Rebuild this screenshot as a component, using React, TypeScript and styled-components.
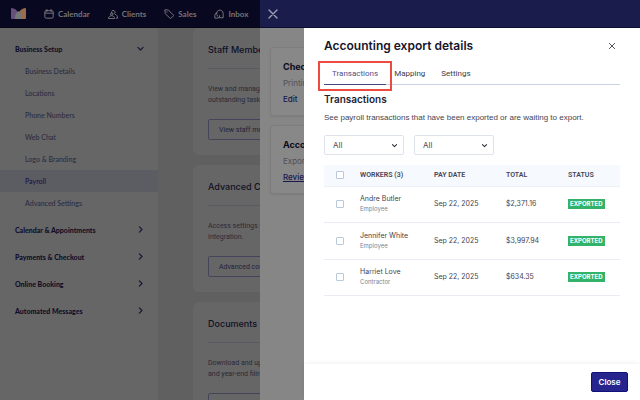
import React from "react";
import styled, { createGlobalStyle } from "styled-components";

const GlobalStyle = createGlobalStyle`
  *, *::before, *::after { box-sizing: border-box; }
  body { margin: 0; font-family: Inter, "Liberation Sans", sans-serif; background: #606060; }
  button, select, input { font-family: inherit; }
  h1, h2, h3, p { margin: 0; font-weight: inherit; }
`;

const Shell = styled.div`
  position: relative;
  height: 100vh;
  overflow: hidden;
  display: flex;
  flex-direction: column;
`;

const TopBar = styled.header`
  flex: none;
  height: 28px;
  padding: 0 11px;
  display: flex;
  align-items: center;
  background: #080820;
  border-bottom: 1px solid #050514;
`;

const Logo = styled.svg`
  width: 15px;
  height: 11px;
  margin-right: 18px;
`;

const TopNav = styled.nav`
  display: flex;
  gap: 18px;
`;

const TopLink = styled.a`
  display: flex;
  align-items: center;
  gap: 4px;
  color: #74747a;
  font: 700 8px/12px Lato, sans-serif;
  text-decoration: none;
  svg { width: 10px; height: 10px; }
`;

const Icon = styled.svg`
  flex: none;
  fill: none;
  stroke: currentColor;
  stroke-linecap: round;
  stroke-linejoin: round;
`;

const Body = styled.div`
  flex: 1;
  min-height: 0;
  display: grid;
  grid-template-columns: 158px 1fr;
`;

const Sidebar = styled.nav`
  background: #666666;
  padding-top: 7px;
  font-family: Lato, sans-serif;
`;

const GroupButton = styled.button`
  display: flex;
  align-items: center;
  justify-content: space-between;
  width: 100%;
  height: 27px;
  padding: 0 13px 0 15px;
  border: 0;
  background: none;
  color: #0e0e28;
  font-size: 7px;
  font-weight: 900;
  text-align: left;
  svg { width: 9px; height: 9px; color: #1b1b38; }
`;

const SubList = styled.ul`
  list-style: none;
  margin: -2px 0 0;
  padding: 0 0 2px;
`;

const SubLink = styled.a<{ $active?: boolean }>`
  display: block;
  height: 22px;
  padding-left: 25px;
  font-size: 7px;
  line-height: 22px;
  font-weight: 500;
  text-decoration: none;
  color: ${p => (p.$active ? "#121248" : "#2c2c42")};
  background: ${p => (p.$active ? "#5c5c63" : "transparent")};
`;

const Content = styled.main`
  min-width: 0;
  overflow: hidden;
  padding: 0 35px;
  background: #606060;
  display: flex;
  flex-direction: column;
  gap: 10px;
`;

const Card = styled.section`
  flex: none;
  height: 127px;
  padding: 0 15px;
  border-radius: 6px;
  background: #666666;
  color: #2a2a38;
`;

const CardTitle = styled.h2`
  height: 41px;
  padding-top: 16px;
  border-bottom: 1px solid #5a5a60;
  font-size: 9px;
  line-height: 12px;
  font-weight: 500;
  color: #101024;
`;

const CardText = styled.p`
  margin: 15px 0 13px;
  font-family: Roboto, sans-serif;
  font-size: 7px;
  line-height: 11px;
  white-space: pre-line;
`;

const CardButton = styled.button`
  display: block;
  height: 21px;
  padding: 0 10px;
  border: 1px solid #44445a;
  border-radius: 2px;
  background: none;
  color: #22223a;
  font-family: Roboto, sans-serif;
  font-size: 7px;
`;

const Drawer = styled.aside`
  position: absolute;
  inset: 0 0 0 260px;
  background: #868686;
`;

const DrawerBar = styled.div`
  height: 28px;
  padding: 0 6px;
  display: flex;
  align-items: center;
  background: #1a1c4c;
  border-bottom: 1px solid #0c0c30;
`;

const IconButton = styled.button<{ $large?: boolean }>`
  display: grid;
  place-items: center;
  width: 14px;
  height: 14px;
  padding: 0;
  border: 0;
  background: none;
  color: ${p => (p.$large ? "#a1a3b8" : "#3c3c48")};
  svg { width: ${p => (p.$large ? 12 : 8)}px; height: ${p => (p.$large ? 12 : 8)}px; }
`;

const DrawerBody = styled.div`
  padding: 19px 10px;
  display: grid;
  gap: 9px;
`;

const MiniCard = styled.section`
  height: 69px;
  padding: 11px 12px;
  border: 1px solid #7d7d7d;
  border-radius: 3px;
  background: #888888;
  box-shadow: 0 1px 2px #00000014;
  font-size: 8px;
  line-height: 16px;
  color: #505057;
  h3 { font-size: 9px; font-weight: 700; color: #0b0b1b; }
`;

const MiniLink = styled.a<{ $plain?: boolean }>`
  color: #17174f;
  font-weight: 500;
  text-decoration: ${p => (p.$plain ? "none" : "underline")};
`;

const Dialog = styled.section`
  position: absolute;
  inset: 28px 0 0 304px;
  background: #fff;
  display: flex;
  flex-direction: column;
`;

const DialogMain = styled.div`
  flex: 1;
  min-height: 0;
  padding: 9px 20px 0;
`;

const DialogHeader = styled.header`
  display: flex;
  align-items: center;
  justify-content: space-between;
  height: 18px;
  padding-right: 1px;
`;

const DialogTitle = styled.h1`
  font-size: 12px;
  line-height: 18px;
  font-weight: 600;
  color: #15152e;
`;

const Tabs = styled.div`
  display: flex;
  margin-top: 9px;
  height: 21px;
  border-bottom: 1px solid #c8d3e5;
`;

const Tab = styled.button<{ $active?: boolean }>`
  position: relative;
  height: 21px;
  padding: 0 8px;
  border: 0;
  border-bottom: 1px solid ${p => (p.$active ? "#45457f" : "transparent")};
  background: none;
  font-family: Roboto, sans-serif;
  font-size: 8px;
  line-height: 20px;
  color: ${p => (p.$active ? "#50508a" : "#3c3c48")};
`;

const Highlight = styled.span`
  position: absolute;
  inset: -3px -6px -7px;
  border: 2px solid #ee4b40;
  pointer-events: none;
`;

const SectionTitle = styled.h2`
  margin-top: 7px;
  font-size: 10px;
  line-height: 15px;
  font-weight: 600;
  color: #1d1d33;
`;

const Lead = styled.p`
  margin-top: 5px;
  font-family: "Liberation Sans", sans-serif;
  font-size: 8px;
  line-height: 12px;
  color: #45454f;
`;

const Filters = styled.div`
  display: flex;
  gap: 10px;
  margin: 11px 0 10px;
`;

const SelectWrap = styled.label`
  display: grid;
  width: 80px;
  align-items: center;
  select, svg { grid-area: 1 / 1; }
  svg { justify-self: end; width: 7px; height: 7px; margin-right: 6px; color: #2b2b38; pointer-events: none; }
`;

const Select = styled.select`
  appearance: none;
  width: 100%;
  height: 20px;
  padding: 0 8px;
  border: 1px solid #dde2ec;
  border-radius: 2px;
  background: #fff;
  color: #4a4a54;
  font-size: 8px;
`;

const Table = styled.table`
  width: 100%;
  table-layout: fixed;
  border-collapse: collapse;
  text-align: left;
`;

const Th = styled.th<{ $w?: number }>`
  width: ${p => (p.$w ? p.$w + "px" : "auto")};
  height: 21px;
  padding: 0;
  background: #f6f9fd;
  border-bottom: 1px solid #edf0f5;
  font-family: Roboto, sans-serif;
  font-size: 7px;
  font-weight: 600;
  color: #45455a;
`;

const Td = styled.td`
  height: 36px;
  padding: 0;
  border-bottom: 1px solid #e9edf3;
  font-size: 7px;
  line-height: 10px;
  color: #44444e;
  tr:nth-child(2) > & { height: 37px; }
`;

const Role = styled.span`
  display: block;
  font-size: 6px;
  line-height: 10px;
  color: #7d8392;
`;

const Check = styled.input`
  appearance: none;
  display: block;
  width: 8px;
  height: 8px;
  margin: 0 0 0 12px;
  border: 1px solid #bac8dc;
  border-radius: 1px;
  background: #fff;
`;

const Badge = styled.span`
  display: inline-block;
  padding: 0 2px;
  background: #33b36a;
  color: #fff;
  font-size: 6px;
  line-height: 10px;
  font-weight: 700;
`;

const Footer = styled.footer`
  flex: none;
  height: 36px;
  padding: 0 12px;
  display: flex;
  align-items: center;
  justify-content: flex-end;
  background: #fff;
  box-shadow: 0 -1px 5px #0000000f;
`;

const CloseButton = styled.button`
  width: 37px;
  height: 20px;
  padding: 0;
  border: 1px solid #10107a;
  border-radius: 2px;
  background: #25258d;
  color: #fff;
  font-size: 8px;
  font-weight: 600;
`;

const Chevron = ({ down }: { down?: boolean }) => (
  <Icon viewBox="0 0 24 24" strokeWidth="3.5">
    <path d={down ? "M5 9l7 7 7-7" : "M9 5l7 7-7 7"} />
  </Icon>
);

const Cross = () => (
  <Icon viewBox="0 0 24 24" strokeWidth="2.6">
    <path d="M4 4l16 16M20 4L4 20" />
  </Icon>
);

const topLinks = [
  { label: "Calendar", path: "M5 4h14a3 3 0 0 1 3 3v12a3 3 0 0 1-3 3H5a3 3 0 0 1-3-3V7a3 3 0 0 1 3-3zM7 1v5M17 1v5M2 10h20" },
  { label: "Clients", path: "M9 9a3 3 0 1 0 0 6a3 3 0 0 0 0-6zM1 22c0-8 15-8 15 0zM9 5a4.500 4.500 0 1 1 7 6M18 13c3 1 5 4 5 9h-3" },
  { label: "Sales", path: "M2 3l1 8 11 11c1 1 2 1 3 0l5-5c1-1 1-2 0-3L11 3zM7 7v1" },
  { label: "Inbox", path: "M8 16A8 8 0 1 1 22 11v10h-9a6 6 0 0 1-4-2M7 9a6 6 0 0 0-5 6v7h6a6 6 0 0 0 6-6" },
];

const subLinks = ["Business Details", "Locations", "Phone Numbers", "Web Chat", "Logo & Branding", "Payroll", "Advanced Settings"];
const groups = ["Calendar & Appointments", "Payments & Checkout", "Online Booking", "Automated Messages"];

const cards = [
  { title: "Staff Members", text: "View and manage\noutstanding tasks.", action: "View staff members" },
  { title: "Advanced Config", text: "Access settings such\nIntegration.", action: "Advanced config" },
  { title: "Documents", text: "Download and upload\nand year-end filings.", action: "View documents" },
];

const workers = [
  { name: "Andre Butler", role: "Employee", total: "$2,371.16" },
  { name: "Jennifer White", role: "Employee", total: "$3,997.94" },
  { name: "Harriet Love", role: "Contractor", total: "$634.35" },
];

export default function App() {
  return (
    <Shell>
      <GlobalStyle />
      <TopBar>
        <Logo viewBox="0 0 15 11">
          <path d="M0 1Q0 0 1 0Q6 1 7 5L5 11H1Q0 11 0 10z" fill="#66517c" />
          <path d="M15 1Q15 0 14 0Q9 1 8 5L10 11H14Q15 11 15 10z" fill="#9a6b4c" />
          <path d="M4 11Q4 4 8 3Q11 5 11 11z" fill="#777777" />
        </Logo>
        <TopNav>
          {topLinks.map(l => (
            <TopLink href="#" key={l.label}>
              <Icon viewBox="0 0 24 24" strokeWidth="2.4"><path d={l.path} /></Icon>
              {l.label}
            </TopLink>
          ))}
        </TopNav>
      </TopBar>
      <Body>
        <Sidebar>
          <GroupButton>Business Setup<Chevron down /></GroupButton>
          <SubList>
            {subLinks.map(s => <li key={s}><SubLink href="#" $active={s === "Payroll"}>{s}</SubLink></li>)}
          </SubList>
          {groups.map(g => <GroupButton key={g}>{g}<Chevron /></GroupButton>)}
        </Sidebar>
        <Content>
          {cards.map(c => (
            <Card key={c.title}>
              <CardTitle>{c.title}</CardTitle>
              <CardText>{c.text}</CardText>
              <CardButton>{c.action}</CardButton>
            </Card>
          ))}
        </Content>
      </Body>
      <Drawer>
        <DrawerBar>
          <IconButton $large aria-label="Close drawer"><Cross /></IconButton>
        </DrawerBar>
        <DrawerBody>
          <MiniCard>
            <h3>Checks</h3>
            <p>Printing</p>
            <MiniLink href="#" $plain>Edit</MiniLink>
          </MiniCard>
          <MiniCard>
            <h3>Accounting</h3>
            <p>Export</p>
            <MiniLink href="#">Review</MiniLink>
          </MiniCard>
        </DrawerBody>
      </Drawer>
      <Dialog role="dialog" aria-label="Accounting export details">
        <DialogMain>
          <DialogHeader>
            <DialogTitle>Accounting export details</DialogTitle>
            <IconButton aria-label="Close dialog"><Cross /></IconButton>
          </DialogHeader>
          <Tabs role="tablist">
            <Tab role="tab" aria-selected $active>Transactions<Highlight /></Tab>
            <Tab role="tab">Mapping</Tab>
            <Tab role="tab">Settings</Tab>
          </Tabs>
          <SectionTitle>Transactions</SectionTitle>
          <Lead>See payroll transactions that have been exported or are waiting to export.</Lead>
          <Filters>
            {["Worker filter", "Status filter"].map(f => (
              <SelectWrap key={f}>
                <Select aria-label={f}><option>All</option></Select>
                <Chevron down />
              </SelectWrap>
            ))}
          </Filters>
          <Table>
            <thead>
              <tr>
                <Th $w={36}><Check type="checkbox" aria-label="Select all workers" /></Th>
                <Th $w={74}>WORKERS (3)</Th>
                <Th $w={72}>PAY DATE</Th>
                <Th $w={62}>TOTAL</Th>
                <Th>STATUS</Th>
              </tr>
            </thead>
            <tbody>
              {workers.map(w => (
                <tr key={w.name}>
                  <Td><Check type="checkbox" aria-label={"Select " + w.name} /></Td>
                  <Td>{w.name}<Role>{w.role}</Role></Td>
                  <Td>Sep 22, 2025</Td>
                  <Td>{w.total}</Td>
                  <Td><Badge>EXPORTED</Badge></Td>
                </tr>
              ))}
            </tbody>
          </Table>
        </DialogMain>
        <Footer><CloseButton>Close</CloseButton></Footer>
      </Dialog>
    </Shell>
  );
}
